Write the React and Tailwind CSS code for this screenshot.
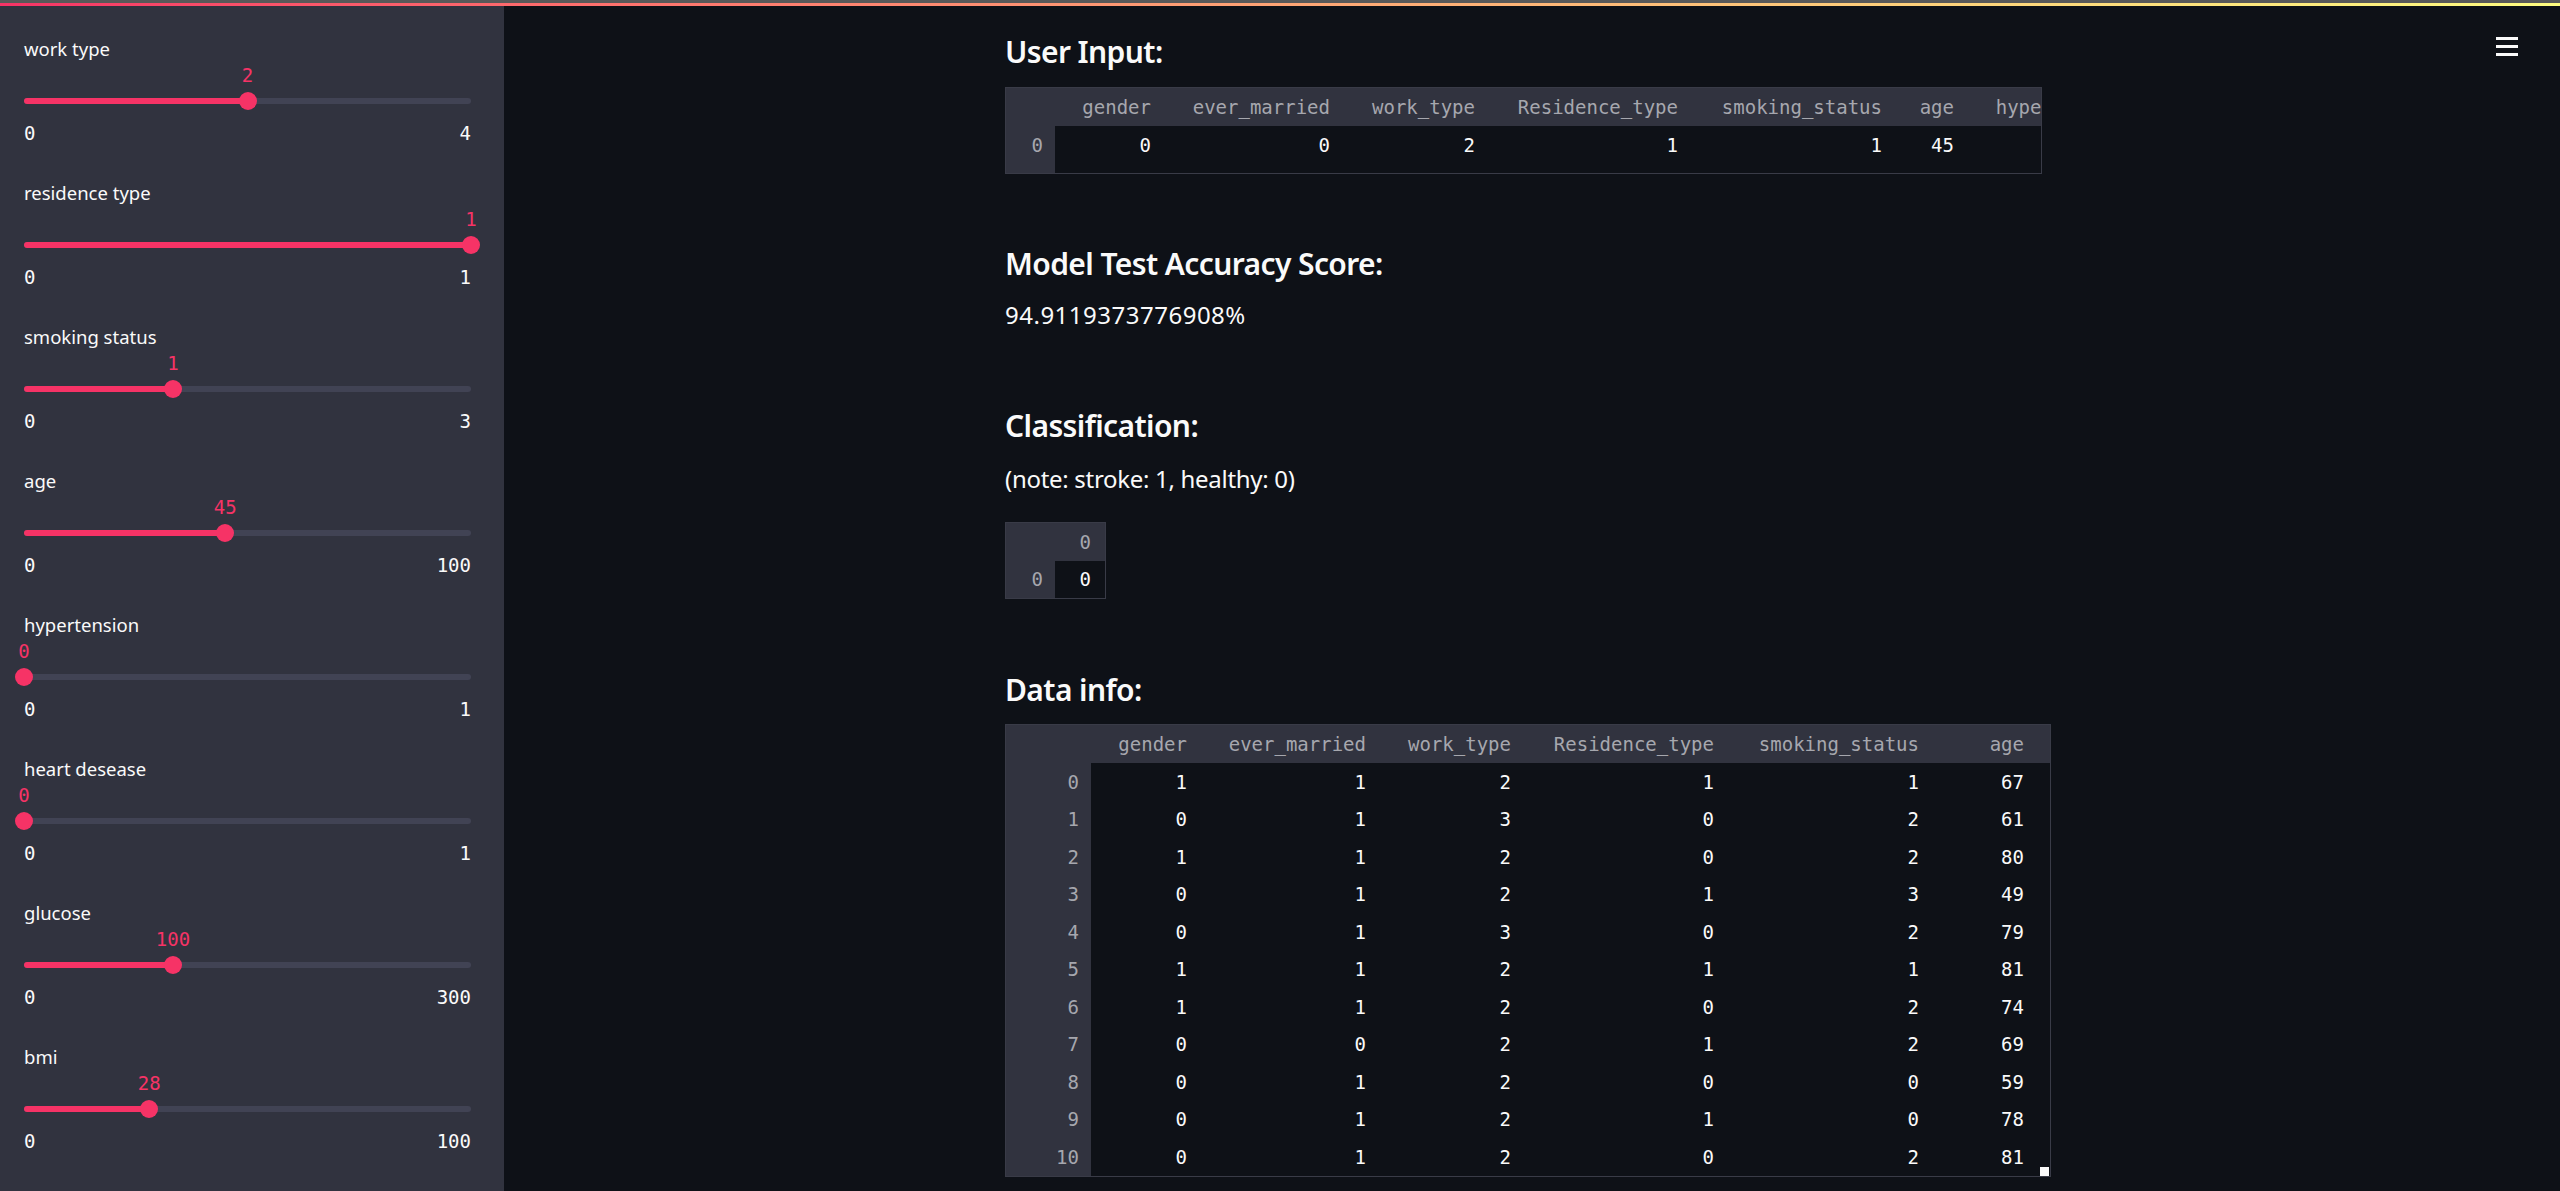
import React from "react";

const SANS = { fontFamily: "'Noto Sans', 'Open Sans', sans-serif" };
const MONO = { fontFamily: "'DejaVu Sans Mono', 'Liberation Mono', monospace" };

const sliders = [
	{ label: "work type", value: 2, min: 0, max: 4 },
	{ label: "residence type", value: 1, min: 0, max: 1 },
	{ label: "smoking status", value: 1, min: 0, max: 3 },
	{ label: "age", value: 45, min: 0, max: 100 },
	{ label: "hypertension", value: 0, min: 0, max: 1 },
	{ label: "heart desease", value: 0, min: 0, max: 1 },
	{ label: "glucose", value: 100, min: 0, max: 300 },
	{ label: "bmi", value: 28, min: 0, max: 100 },
];

const dataRows = [
	[1, 1, 2, 1, 1, 67],
	[0, 1, 3, 0, 2, 61],
	[1, 1, 2, 0, 2, 80],
	[0, 1, 2, 1, 3, 49],
	[0, 1, 3, 0, 2, 79],
	[1, 1, 2, 1, 1, 81],
	[1, 1, 2, 0, 2, 74],
	[0, 0, 2, 1, 2, 69],
	[0, 1, 2, 0, 0, 59],
	[0, 1, 2, 1, 0, 78],
	[0, 1, 2, 0, 2, 81],
];

function Slider({ label, value, min, max }) {
	const pct = ((value - min) / (max - min)) * 100;
	return (
		<div className="mb-[34px]">
			<div className="h-[30px] leading-[30px] text-[18.5px] text-[#fafafa]" style={SANS}>
				{label}
			</div>
			{/* current value over the thumb */}
			<div className="relative h-[22px]">
				<span
					className="absolute top-0 -translate-x-1/2 leading-[22px] text-[19px] text-[#f63366]"
					style={{ ...MONO, left: `${pct}%` }}
				>
					{value}
				</span>
			</div>
			<div className="relative mt-[6px] h-[18px] flex items-center">
				<div className="h-[6px] w-full rounded-full bg-[#414354]" />
				<div
					className="absolute left-0 h-[6px] rounded-full bg-[#f63366]"
					style={{ width: `${pct}%` }}
				/>
				<div
					className="absolute top-0 h-[18px] w-[18px] -translate-x-1/2 rounded-full bg-[#f63366]"
					style={{ left: `${pct}%` }}
				/>
			</div>
			<div
				className="mt-[12px] flex h-[22px] justify-between leading-[22px] text-[19px] text-[#fafafa]"
				style={MONO}
			>
				<span>{min}</span>
				<span>{max}</span>
			</div>
		</div>
	);
}

function Heading({ children, className = "" }) {
	return (
		<h3
			className={`h-[36px] leading-[36px] text-[30px] font-semibold tracking-[-0.6px] text-[#fafafa] whitespace-nowrap ${className}`}
			style={SANS}
		>
			{children}
		</h3>
	);
}

function Table({ columns, indexWidth, rows, rowHeight, bodyPad = 0, className = "", handle = false }) {
	return (
		<div
			className={`relative overflow-hidden border border-[#393b47] text-[19px] ${className}`}
			style={MONO}
		>
			<div className="flex h-[38px] bg-[#31333f] text-[#a6a7ae]">
				<div className="shrink-0" style={{ width: indexWidth }} />
				{columns.map((c, i) => (
					<div
						key={i}
						className="shrink-0 flex items-center justify-end whitespace-nowrap"
						style={{ width: c.w, paddingRight: c.pr ?? 12, flexGrow: c.grow ? 1 : 0 }}
					>
						{c.name}
					</div>
				))}
			</div>
			{rows.map((r, ri) => (
				<div key={ri} className="flex" style={{ height: rowHeight }}>
					<div
						className="shrink-0 flex items-center justify-end pr-[12px] bg-[#31333f] text-[#a6a7ae]"
						style={{ width: indexWidth }}
					>
						{ri}
					</div>
					{columns.map((c, i) => (
						<div
							key={i}
							className="shrink-0 flex items-center justify-end text-[#fafafa] whitespace-nowrap"
							style={{ width: c.w, paddingRight: c.pr ?? 12, flexGrow: c.grow ? 1 : 0 }}
						>
							{r[i]}
						</div>
					))}
				</div>
			))}
			{bodyPad > 0 && (
				<div className="flex" style={{ height: bodyPad }}>
					<div className="shrink-0 bg-[#31333f]" style={{ width: indexWidth }} />
				</div>
			)}
			{handle && (
				<div className="absolute bottom-0 right-[1px] h-[9px] w-[9px] bg-[#fafafa]" />
			)}
		</div>
	);
}

export default function App() {
	const inputCols = [
		{ name: "gender", w: 108 },
		{ name: "ever_married", w: 179 },
		{ name: "work_type", w: 145 },
		{ name: "Residence_type", w: 203 },
		{ name: "smoking_status", w: 204 },
		{ name: "age", w: 72 },
		{ name: "hypertension", w: 179 },
	];
	const dataCols = [
		{ name: "gender", w: 108 },
		{ name: "ever_married", w: 179 },
		{ name: "work_type", w: 145 },
		{ name: "Residence_type", w: 203 },
		{ name: "smoking_status", w: 205 },
		{ name: "age", w: 100, pr: 26, grow: true },
	];

	return (
		<div className="relative flex h-[1191px] w-full overflow-hidden bg-[#0e1117]" style={SANS}>
			{/* top decoration */}
			<div className="absolute inset-x-0 top-0 z-10">
				<div className="h-[3px] bg-[#595959]" />
				<div className="h-[3px] bg-gradient-to-r from-[#f63366] to-[#fffd80]" />
			</div>

			{/* hamburger menu */}
			<div className="absolute right-[42px] top-[37px] z-10 flex w-[22px] flex-col gap-[5px]">
				<div className="h-[3px] bg-[#fafafa]" />
				<div className="h-[3px] bg-[#fafafa]" />
				<div className="h-[3px] bg-[#fafafa]" />
			</div>

			{/* sidebar */}
			<aside className="h-full w-[504px] shrink-0 bg-[#31333f] pl-[24px] pr-[33px] pt-[34px]">
				{sliders.map((s) => (
					<Slider key={s.label} {...s} />
				))}
			</aside>

			{/* main */}
			<main className="flex-1 pl-[501px] pt-[34px]">
				<div className="w-[1047px]">
					<Heading>User Input:</Heading>
					<Table
						className="mt-[17px] w-[1037px]"
						columns={inputCols}
						indexWidth={49}
						rows={[[0, 0, 2, 1, 1, 45, ""]]}
						rowHeight={39}
						bodyPad={8}
					/>

					<Heading className="mt-[72px]">Model Test Accuracy Score:</Heading>
					<p className="mt-[15px] h-[36px] leading-[36px] text-[24px] tracking-[0.5px] text-[#fafafa]">
						94.9119373776908%
					</p>

					<Heading className="mt-[75px]">Classification:</Heading>
					<p className="mt-[17px] h-[36px] leading-[36px] text-[24px] tracking-[-0.3px] text-[#fafafa]">
						(note: stroke: 1, healthy: 0)
					</p>
					<Table
						className="mt-[25px] w-[101px]"
						columns={[{ name: "0", w: 50, pr: 14 }]}
						indexWidth={49}
						rows={[[0]]}
						rowHeight={37}
					/>

					<Heading className="mt-[73px]">Data info:</Heading>
					<Table
						className="mt-[16px] w-[1046px]"
						columns={dataCols}
						indexWidth={85}
						rows={dataRows}
						rowHeight={37.5}
						handle
					/>
				</div>
			</main>
		</div>
	);
}
